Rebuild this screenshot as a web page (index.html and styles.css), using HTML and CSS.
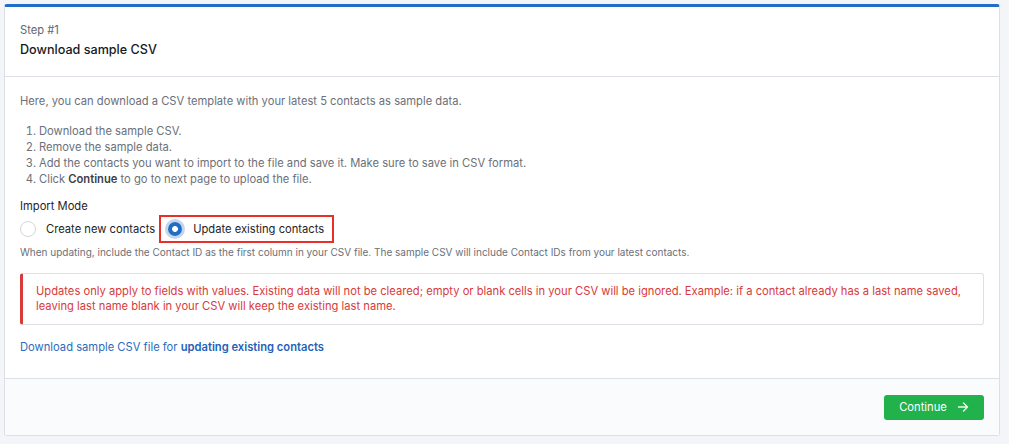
FILE: index.html
```html
<!DOCTYPE html>
<html>
<head>
<meta charset="utf-8">
<link rel="stylesheet" href="styles.css">
</head>
<body>
<div class="card">
  <div class="card-header">
    <div class="step">Step #1</div>
    <div class="title">Download sample CSV</div>
  </div>
  <div class="card-body">
    <p class="intro">Here, you can download a CSV template with your latest 5 contacts as sample data.</p>
    <ol class="steps">
      <li>Download the sample CSV.</li>
      <li>Remove the sample data.</li>
      <li>Add the contacts you want to import to the file and save it. Make sure to save in CSV format.</li>
      <li>Click <strong>Continue</strong> to go to next page to upload the file.</li>
    </ol>
    <div class="mode-label">Import Mode</div>
    <div class="radios">
      <label class="radio">
        <span class="circle"></span>
        <span class="radio-text">Create new contacts</span>
      </label>
      <label class="radio radio-selected">
        <span class="circle checked"></span>
        <span class="radio-text">Update existing contacts</span>
      </label>
    </div>
    <p class="hint">When updating, include the Contact ID as the first column in your CSV file. The sample CSV will include Contact IDs from your latest contacts.</p>
    <div class="alert">Updates only apply to fields with values. Existing data will not be cleared; empty or blank cells in your CSV will be ignored. Example: if a contact already has a last name saved, leaving last name blank in your CSV will keep the existing last name.</div>
    <a class="download" href="#">Download sample CSV file for <strong>updating existing contacts</strong></a>
  </div>
  <div class="card-footer">
    <button class="btn-continue">Continue
      <svg class="arrow" width="12" height="12" viewBox="0 0 12 12" fill="none" stroke="currentColor" stroke-width="1.4" stroke-linecap="round" stroke-linejoin="round"><path d="M1.5 6h9M6.5 2l4 4-4 4"/></svg>
    </button>
  </div>
</div>
</body>
</html>
```

FILE: styles.css
```css
* { box-sizing: border-box; }
html, body { margin: 0; padding: 0; }
body {
  background: #f4f5f9;
  font-family: Inter, "Noto Sans", sans-serif;
  color: #1f2328;
  padding: 4px 9px 0 4px;
}
.card {
  background: #fff;
  border: 1px solid #dcdfe6;
  border-top: 3px solid #1f6dc4;
  border-radius: 3px;
  height: 432px;
  display: flex;
  flex-direction: column;
}
.card-header {
  padding: 15px 15px 17px;
  border-bottom: 1px solid #dcdfe6;
}
.step { font-size: 11.2px; color: #606770; line-height: 16px; }
.title { font-size: 12.6px; color: #16191d; line-height: 18px; margin-top: 3px; font-weight: 500; }
.card-body {
  padding: 16px 15px 0;
  font-size: 11.2px;
  color: #6b7079;
  flex: 1;
}
.intro { margin: 0; line-height: 16px; }
.steps { margin: 14px 0 0; padding-left: 19px; line-height: 16px; }
.steps li { height: 16px; }
.steps strong { color: #3b4047; font-weight: 600; }
.mode-label { margin-top: 11px; color: #1f2328; line-height: 16px; }
.radios { display: flex; align-items: center; margin-top: 1px; }
.radio { display: flex; align-items: center; color: #1f2328; height: 28px; }
.radio .circle {
  width: 16px; height: 16px; border-radius: 50%;
  border: 1px solid #d4d7dd; background: #fff;
  display: inline-block; margin-right: 10px; flex: none;
}
.radio-selected {
  border: 2px solid #e8302a;
  padding: 0 8px 0 7px;
  margin-left: 4px;
}
.circle.checked {
  width: 14px; height: 14px;
  border: none;
  background: radial-gradient(circle, #fff 0 2.6px, #1f6dc4 3.2px);
  box-shadow: 0 0 0 3px #c3d6ee;
  margin-right: 11px;
}
.hint { margin: 2px 0 0; font-size: 10px; line-height: 14px; color: #6b7079; }
.alert {
  margin-top: 14px;
  border: 1px solid #dcdfe6;
  border-left: 3px solid #d93a3a;
  border-radius: 3px;
  padding: 10px 13px;
  color: #d93a3a;
  line-height: 15px;
}
.download {
  display: block;
  margin-top: 14px;
  color: #2b6cc0;
  text-decoration: none;
  line-height: 16px;
}
.download strong { font-weight: 600; color: #1f62b8; }
.card-footer {
  border-top: 1px solid #dcdfe6;
  background: #fafbfd;
  height: 57px;
  display: flex;
  justify-content: flex-end;
  align-items: center;
  padding: 0 15px;
}
.btn-continue {
  background: #22b24c;
  color: #fff;
  border: none;
  border-radius: 3px;
  width: 100px;
  height: 25px;
  font-family: inherit;
  font-size: 11.2px;
  display: flex;
  align-items: center;
  justify-content: center;
  gap: 10px;
}
.arrow { color: #e9f7ed; }
```
